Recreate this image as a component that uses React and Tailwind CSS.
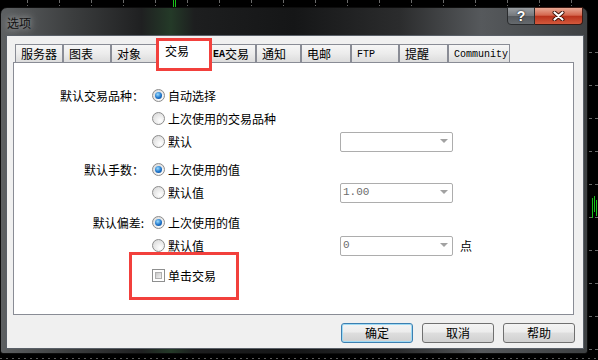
import React from 'react';

const tabs = [
    { label: '服务器', w: 'w-[48px]' },
    { label: '图表', w: 'w-[48px]' },
    { label: '对象', w: 'w-[47px]' },
    { label: '交易', w: 'w-[52px]', active: true },
    { label: '交易', w: 'w-[46px]', prefix: 'EA' },
    { label: '通知', w: 'w-[45px]' },
    { label: '电邮', w: 'w-[50px]' },
    { label: 'FTP', w: 'w-[48px]', mono: true },
    { label: '提醒', w: 'w-[49px]' },
    { label: 'Community', w: 'w-[62px]', mono: true },
];

const Radio = ({ checked }) => (
    <span className="w-[13px] h-[13px] rounded-full border border-[#8c8c8c] bg-[radial-gradient(circle_at_65%_70%,#ffffff,#d4d4d4)] flex items-center justify-center shrink-0">
        {checked && (
            <span className="w-[7px] h-[7px] rounded-full bg-[radial-gradient(circle_at_40%_35%,#9bdcff,#1c73c9_55%,#0b3f86)]" />
        )}
    </span>
);

const Select = ({ value }) => (
    <div className="w-[113px] h-[20px] rounded-[2px] border border-[#adadad] bg-white flex items-center justify-between pl-[2px] pr-[4px]">
        <span className="font-['Liberation_Mono',monospace] text-[11px] text-[#6d6d6d]">{value}</span>
        <svg width="8" height="5" viewBox="0 0 8 5">
            <path d="M0 0 L8 0 L4 4 Z" fill="#a2a2a2" />
        </svg>
    </div>
);

const Option = ({ checked, text, select, unit }) => (
    <div className="h-[23px] flex items-center">
        <div className="w-[188px] flex items-center gap-[3px]">
            <Radio checked={checked} />
            <span>{text}</span>
        </div>
        {select !== undefined && <Select value={select} />}
        {unit && <span className="ml-[7px]">{unit}</span>}
    </div>
);

const Group = ({ label, children, className = '' }) => (
    <div className={`flex ${className}`}>
        <div className="w-[130px] h-[23px] leading-[23px] text-right">{label}</div>
        <div className="ml-[8px] flex flex-col">{children}</div>
    </div>
);

const Button = ({ children, focused }) => (
    <button
        className={`w-[72px] h-[20px] rounded-[3px] border text-[12px] text-black flex items-center justify-center bg-[linear-gradient(180deg,#f4f4f4_0%,#ececec_45%,#dedede_50%,#d0d0d0_100%)] ${
            focused ? 'border-[#3c7fb1] shadow-[inset_0_0_0_1px_#9fdaf4]' : 'border-[#707070]'
        }`}
    >
        {children}
    </button>
);

const ChartGrid = () => {
    const xs = [];
    for (let x = 27; x < 598; x += 32) xs.push(x);
    const ys = [];
    for (let y = 52; y < 360; y += 33) ys.push(y);
    return (
        <svg className="absolute inset-0" width="598" height="360">
            {xs.map((x) => (
                <line key={x} x1={x + 0.5} y1="0" x2={x + 0.5} y2="6" stroke="#6a6a6a" strokeDasharray="3 2" />
            ))}
            <line x1="173.5" y1="0" x2="173.5" y2="7" stroke="#19c219" />
            <line x1="175.5" y1="0" x2="175.5" y2="7" stroke="#19c219" />
            {ys.map((y) => (
                <line key={y} x1="589" y1={y + 0.5} x2="598" y2={y + 0.5} stroke="#6a6a6a" strokeDasharray="3 3" />
            ))}
            <line x1="592.5" y1="198" x2="592.5" y2="218" stroke="#19c219" />
            <line x1="594.5" y1="196" x2="594.5" y2="212" stroke="#19c219" />
            <line x1="596.5" y1="200" x2="596.5" y2="216" stroke="#19c219" />
            <line x1="0" y1="358.5" x2="598" y2="358.5" stroke="#5a5a5a" strokeDasharray="2 4" />
        </svg>
    );
};

const App = () => {
    return (
        <div className="relative w-[598px] h-[360px] bg-black overflow-hidden pt-[7px] font-['Noto_Sans_CJK_SC',sans-serif] text-[12px] text-black">
            <ChartGrid />

            {/* dialog frame */}
            <div className="relative w-[588px] h-[347px] rounded-t-[7px] rounded-b-[3px] border border-[#0d0d0d] flex flex-col bg-[linear-gradient(90deg,#5d6062_0%,#3c3e3f_12%,#1f2021_24%,#243a28_29%,#1d1e1f_33%,#151617_50%,#2b2c2d_68%,#56595c_82%,#3e4143_100%)]">
                {/* title bar */}
                <div className="h-[27px] flex items-start justify-between">
                    <span className="pl-[6px] pt-[6px] text-[12px] text-[#111] [text-shadow:0_0_6px_rgba(255,255,255,0.55),0_0_12px_rgba(255,255,255,0.35)]">
                        选项
                    </span>
                    <div className="flex -mt-[1px] mr-[4px]">
                        <div className="w-[28px] h-[18px] rounded-bl-[4px] border border-[#2a2c2e] flex items-center justify-center bg-[linear-gradient(180deg,#9a9ea2_0%,#75797d_48%,#55595d_52%,#666a6e_100%)]">
                            <span className="font-['Liberation_Sans',sans-serif] font-bold text-[14px] leading-none text-white [text-shadow:0_0_2px_#000]">?</span>
                        </div>
                        <div className="w-[48px] h-[18px] rounded-br-[4px] border border-l-0 border-[#3a1a14] flex items-center justify-center bg-[linear-gradient(180deg,#e8a894_0%,#d4674e_45%,#b9331c_52%,#d4593c_100%)]">
                            <svg width="13" height="10" viewBox="0 0 13 10">
                                <path d="M2.5 1.5 L10.5 8.5 M10.5 1.5 L2.5 8.5" stroke="#3b1208" strokeWidth="4" strokeLinecap="round" />
                                <path d="M2.5 1.5 L10.5 8.5 M10.5 1.5 L2.5 8.5" stroke="#ffffff" strokeWidth="2.2" strokeLinecap="round" />
                            </svg>
                        </div>
                    </div>
                </div>

                {/* client area */}
                <div className="ml-[5px] w-[578px] h-[314px] border border-[#5a6068] bg-[#f0f0f0] pt-[5px] pl-[6px] pr-[8px] flex flex-col">
                    {/* tabs */}
                    <div className="h-[21px] flex items-end pl-[2px]">
                        {tabs.map((t, i) =>
                            t.active ? (
                                <div
                                    key={i}
                                    className={`relative z-10 ${t.w} h-[23px] -mb-[1px] border border-b-0 border-[#898c95] bg-white pl-[6px] pt-[2px] leading-[16px]`}
                                >
                                    {t.label}
                                    <span className="absolute -left-[3px] -top-[3px] w-[56px] h-[33px] border-[3px] border-[#f2403c] pointer-events-none" />
                                </div>
                            ) : (
                                <div
                                    key={i}
                                    className={`${t.w} h-[18px] border border-b-0 border-[#898c95] bg-[linear-gradient(180deg,#f6f6f6_0%,#ececec_50%,#dcdcdc_100%)] flex items-center pt-[1px] ${
                                        t.prefix ? 'pl-[2px]' : 'pl-[5px]'
                                    }`}
                                >
                                    {t.prefix && (
                                        <span className="font-['Liberation_Mono',monospace] font-bold text-[10px]">{t.prefix}</span>
                                    )}
                                    {t.mono ? (
                                        <span className="font-['Liberation_Mono',monospace] text-[10px]">{t.label}</span>
                                    ) : (
                                        t.label
                                    )}
                                </div>
                            )
                        )}
                    </div>

                    {/* tab panel */}
                    <div className="w-[561px] h-[253px] border border-[#898c95] bg-white pt-[21px]">
                        <Group label="默认交易品种：">
                            <Option checked text="自动选择" />
                            <Option text="上次使用的交易品种" />
                            <Option text="默认" select="" />
                        </Group>
                        <Group label="默认手数：" className="mt-[5px]">
                            <Option checked text="上次使用的值" />
                            <Option text="默认值" select="1.00" />
                        </Group>
                        <Group label="默认偏差:" className="mt-[7px]">
                            <Option checked text="上次使用的值" />
                            <Option text="默认值" select="0" unit="点" />
                        </Group>
                        <div className="relative mt-[7px] ml-[138px] h-[23px] flex items-center gap-[3px]">
                            <span className="w-[13px] h-[13px] border border-[#8e8f8f] bg-white p-[2px] shrink-0">
                                <span className="block w-full h-full border border-[#b0b0b0] bg-[linear-gradient(135deg,#c8c8c8,#f2f2f2)]" />
                            </span>
                            <span>单击交易</span>
                            <span className="absolute -left-[23px] -top-[12px] w-[110px] h-[48px] border-[3px] border-[#f2403c] pointer-events-none" />
                        </div>
                    </div>

                    {/* buttons */}
                    <div className="mt-[8px] flex justify-end gap-[9px]">
                        <Button focused>确定</Button>
                        <Button>取消</Button>
                        <Button>帮助</Button>
                    </div>
                </div>
            </div>
        </div>
    );
};

export default App;
